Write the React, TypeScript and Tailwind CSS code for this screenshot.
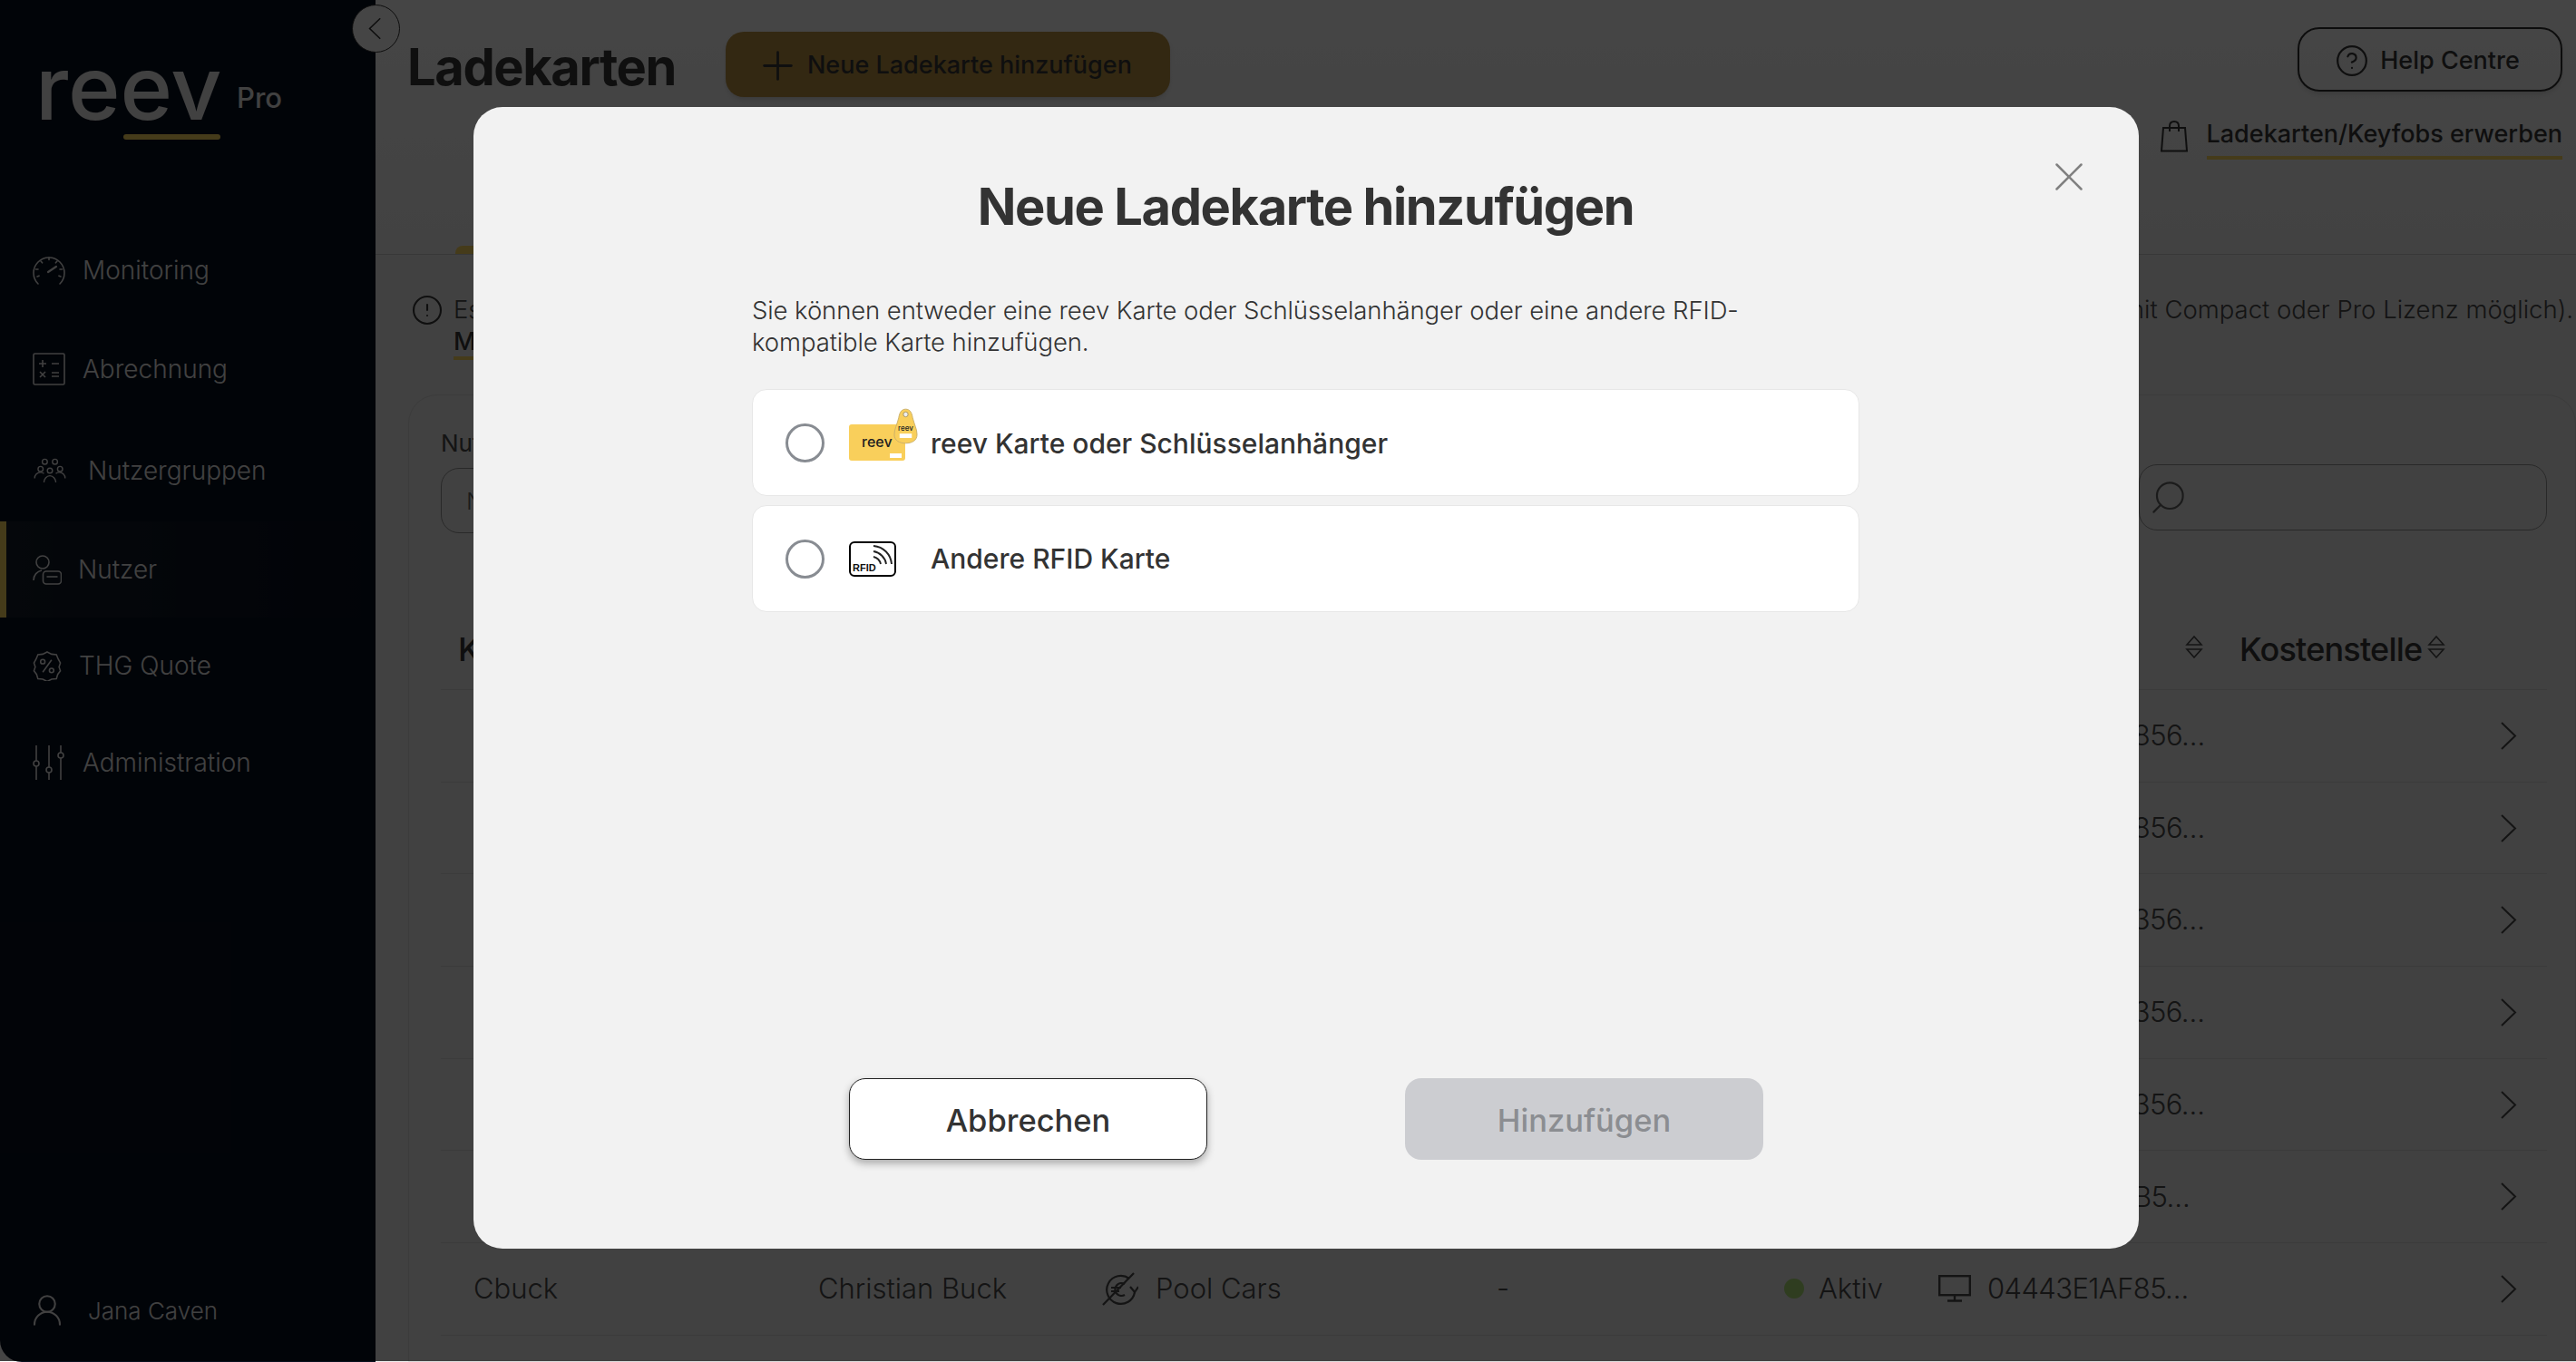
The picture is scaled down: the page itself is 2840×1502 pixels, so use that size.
import React from "react";
import { CircleAlert, CircleHelp, Plus, Search, UserRound, X } from "lucide-react";

const font = "font-['Inter','Liberation_Sans',sans-serif]";

const GaugeIcon = () => (
  <svg viewBox="0 0 36 36" className="w-9 h-9" fill="none" stroke="currentColor" strokeWidth="1.6" strokeLinecap="round">
    <path d="M6 33A17 17 0 1 1 30 33" />
    <path d="M18 4v2.500M9 8l1.600 1.800M27 8l-1.600 1.800M3.500 17H6M30 17h2.500M5 25l2-.8M31 25l-2-.8" />
    <path d="M17 20l9-6" strokeWidth="2.200" />
  </svg>
);

const CalcIcon = () => (
  <svg viewBox="0 0 36 36" className="w-9 h-9" fill="none" stroke="currentColor" strokeWidth="1.600">
    <rect x="1" y="1" width="34" height="34" rx="1.500" />
    <path d="M7 12h8M11 8v8M21 12h8M8 21l6 6M14 21l-6 6M21 22h8M21 26h8" />
  </svg>
);

const GroupIcon = () => (
  <svg viewBox="0 0 38 30" className="w-[38px] h-[28px]" fill="none" stroke="currentColor" strokeWidth="1.500">
    <circle cx="13" cy="4.500" r="3" />
    <circle cx="25" cy="4.500" r="3" />
    <circle cx="8" cy="13" r="3" />
    <circle cx="19" cy="15" r="3" />
    <circle cx="31" cy="13" r="3" />
    <path d="M1 24c0-4 3-7 7-7 2 0 3 .6 4 1.500M37 24c0-4-3-7-7-7-2 0-3 .6-4 1.500M12 29c0-4 3-8 7-8s7 4 7 8" />
  </svg>
);

const UserCardIcon = () => (
  <svg viewBox="0 0 32 33" className="w-8 h-[33px]" fill="none" stroke="currentColor" strokeWidth="1.600">
    <circle cx="11" cy="8" r="7" />
    <path d="M1 28c0-6 4-10 9-11" />
    <rect x="11.500" y="18" width="20" height="14" rx="3.500" />
    <path d="M15.500 24h12" />
  </svg>
);

const PercentIcon = () => (
  <svg viewBox="0 0 32 34" className="w-8 h-[33px]" fill="none" stroke="currentColor" strokeWidth="1.600">
    <path d="M16 1l5 2.500 5.500.5 2 5 2.500 4.500-1.500 4.500 1.500 4.500-3 4-1.500 5-5.500.5-5 2.500-5-2.500-5.500-.5-1.500-5-3-4 1.500-4.500L1 13.500 3.500 9l2-5L11 3.500z" />
    <path d="M11 24l10-14" />
    <circle cx="11" cy="12" r="2.500" />
    <circle cx="21" cy="22" r="2.500" />
  </svg>
);

const SliderIcon = () => (
  <svg viewBox="0 0 36 38" className="w-9 h-[38px]" fill="none" stroke="currentColor" strokeWidth="1.600">
    <path d="M4 0v17M4 23v15M18 0v24M18 30v8M31 0v8M31 14v24" />
    <circle cx="4" cy="20" r="3" />
    <circle cx="18" cy="27" r="3" />
    <circle cx="31" cy="11" r="3" />
  </svg>
);

const SortIcon = () => (
  <svg viewBox="0 0 20 25" className="w-5 h-[25px] -mt-[5px]" fill="none" stroke="currentColor" strokeWidth="1.600">
    <path d="M2 10L10 1l8 9zM2 15l8 9 8-9z" />
  </svg>
);

const PoolCarIcon = () => (
  <svg viewBox="0 0 40 37" className="w-10 h-[37px] shrink-0" fill="none" stroke="currentColor" strokeWidth="2.200">
    <path d="M30 7A15.500 15.500 0 1 0 36 22" />
    <path d="M1 36L35 1" />
    <path d="M31 16l5 6 4-6" />
    <path d="M25 13a7 7 0 1 0 0 12M10 17h11M10 21h9" />
  </svg>
);

const MonitorIcon = () => (
  <svg viewBox="0 0 36 30" className="w-9 h-[30px] shrink-0" fill="none" stroke="currentColor" strokeWidth="2.400">
    <rect x="1.200" y="1.200" width="33.600" height="21" />
    <path d="M18 23v5M10 28.500h16" />
  </svg>
);

const BagIcon = () => (
  <svg viewBox="0 0 30 35" className="w-[30px] h-[35px] mt-[3px] shrink-0" fill="none" stroke="currentColor" strokeWidth="2">
    <path d="M3 8h24l2 25.500H1z" />
    <path d="M10 12V6c0-3 2-5 5-5s5 2 5 5v6" />
  </svg>
);

const ChevronThin = ({ left = false }: { left?: boolean }) => (
  <svg viewBox="0 0 18 31" className={left ? "w-[14px] h-[25px]" : "w-[18px] h-[31px]"} fill="none" stroke="currentColor" strokeWidth="2">
    <path d={left ? "M17 1L2 15.500 17 30" : "M1 1l15 14.500L1 30"} />
  </svg>
);

const ReevCardIcon = () => (
  <div className="relative w-[76px] h-10">
    <div className="w-[62px] h-[40px] bg-[#f9cf5b] rounded-[3px] pl-[14px] pt-[9px]">
      <div className={`text-[16px] leading-[20px] font-medium text-[#222] ${font}`}>reev</div>
    </div>
    <div className="absolute left-[45px] bottom-[3px] w-[13px] h-[5px] bg-white" />
    <svg viewBox="0 0 28 41" className="absolute left-[49px] -top-[18px] w-[27px] h-[40px]">
      <path d="M14 1c5 0 7 4 8 10 2 8 5 13 5 19 0 7-6 10-13 10S1 37 1 30c0-6 3-11 5-19C7 5 9 1 14 1z" fill="#f9cf5b" stroke="#cbb06a" strokeWidth="1" />
      <circle cx="14" cy="7" r="2.800" fill="#eee" stroke="#a8965f" />
      <rect x="7" y="29" width="14" height="5" fill="#fff" />
    </svg>
    <div className={`absolute left-[54px] -top-[1px] text-[8px] leading-[10px] font-medium text-[#222] ${font}`}>reev</div>
  </div>
);

const RfidIcon = () => (
  <div className="relative w-[52px] h-[39px] border-[2.500px] border-black rounded-[6px] bg-white">
    <svg viewBox="0 0 24 24" className="absolute right-[1px] top-[1px] w-[24px] h-[24px]" fill="none" stroke="#222" strokeWidth="1.900">
      <path d="M2 2c11 1 19 9 20 20M2 8c7 1 13 7 14 14M2 14c4 1 7 4 8 8" />
    </svg>
    <div className="absolute left-[2px] bottom-[1px] text-[11px] leading-[13px] font-bold text-[#111] font-['Liberation_Sans',sans-serif]">RFID</div>
  </div>
);

const navItems = [
  { label: "Monitoring", icon: <GaugeIcon />, gap: "gap-[19px]", h: "h-[107px]" },
  { label: "Abrechnung", icon: <CalcIcon />, gap: "gap-[19px]", h: "h-[112px]" },
  { label: "Nutzergruppen", icon: <GroupIcon />, gap: "gap-[23px] pl-[3px]", h: "h-[112px]" },
  { label: "Nutzer", icon: <UserCardIcon />, gap: "gap-[18px]", h: "h-[106px]", active: true },
  { label: "THG Quote", icon: <PercentIcon />, gap: "gap-[19px]", h: "h-[106px]" },
  { label: "Administration", icon: <SliderIcon />, gap: "gap-[19px]", h: "h-[107px]" },
];

const hiddenCodes = ["04443E1AF856…", "04443E1AF856…", "04443E1AF356…", "04443E1AF356…", "04443E1AF356…", "04443E1AEB5…"];

const Sidebar = () => (
  <aside className="w-[414px] shrink-0 h-full bg-[#070f1e] rounded-bl-[24px] flex flex-col text-[#eee] pt-[80px]">
    <div className="pl-[43px] flex items-start h-[80px]">
      <div className="flex flex-col items-end w-[200px] -mt-[9px]">
        <div className={`self-start whitespace-nowrap text-[98px] leading-[52px] h-[77px] font-medium -ml-[4px] ${font}`}>reev</div>
        <div className="w-[107px] h-[6px] rounded-full bg-[#ffda60]" />
      </div>
      <div className={`ml-[18px] mt-[10px] text-[31px] leading-9 font-medium ${font}`}>Pro</div>
    </div>
    <nav className="mt-[84px] flex flex-col">
      {navItems.map((item) => (
        <div
          key={item.label}
          className={`${item.h} flex items-center ${item.gap} ${item.active ? "bg-gradient-to-r from-white/5 to-transparent border-l-[7px] border-[#ffda60] pl-[29px]" : "pl-[36px]"}`}
        >
          {item.icon}
          <span className={`text-[28px] font-light ${font}`}>{item.label}</span>
        </div>
      ))}
    </nav>
    <div className="mt-auto mb-[36px] pl-[31px] flex items-center gap-[24px]">
      <UserRound className="w-[42px] h-[42px]" strokeWidth={1.200} />
      <span className={`text-[26px] font-light ${font}`}>Jana Caven</span>
    </div>
  </aside>
);

const Header = () => (
  <header className="h-[281px] shrink-0 border-b border-[#ccc] pl-[35px] pr-[15px] flex flex-col relative bg-gradient-to-b from-white to-[#f4f4f4]">
    <div className="flex items-start justify-between pt-[30px]">
      <div className="flex items-center pt-[5px]">
        <h1 className={`text-[56px] leading-[66px] pt-[6px] font-bold text-[#3a3a3a] tracking-[-1.400px] ${font}`}>Ladekarten</h1>
        <button className={`ml-[55px] w-[490px] h-[72px] pt-[2px] rounded-[20px] bg-[#bd9443] flex items-center pl-[32px] gap-[7px] text-[27px] font-medium text-[#3a3a3a] shadow-md ${font}`}>
          <Plus className="w-[51px] h-[51px]" strokeWidth={1.300} />
          Neue Ladekarte hinzufügen
        </button>
      </div>
      <button className={`w-[292px] h-[71px] pt-[3px] pr-[6px] rounded-[24px] border-2 border-[#333] flex items-center justify-center gap-[12px] text-[27px] font-medium text-[#3a3a3a] shadow-md ${font}`}>
        <CircleHelp className="w-[38px] h-[38px]" strokeWidth={1.400} />
        Help Centre
      </button>
    </div>
    <div className="flex justify-end items-start mt-[23px] gap-[21px] text-[#3a3a3a]">
      <BagIcon />
      <span className={`text-[27px] leading-[36px] pb-[6px] font-medium border-b-4 border-[#ffda60] ${font}`}>Ladekarten/Keyfobs erwerben</span>
    </div>
    <div className="absolute left-[88px] bottom-0 w-[200px] h-[9px] rounded-t-[8px] bg-[#ffda60]" />
  </header>
);

const Row = ({ code, full = false }: { code: string; full?: boolean }) => (
  <div className={`h-[101.700px] pl-[36px] flex items-center border-b border-[#d8d8d8] text-[31px] font-light text-[#4a4a4a] ${font}`}>
    <span className="w-[380px] shrink-0">{full && "Cbuck"}</span>
    <span className="w-[313px] shrink-0">{full && "Christian Buck"}</span>
    <span className="w-[435px] shrink-0 flex items-center gap-[19px]">
      {full && <PoolCarIcon />}
      {full && "Pool Cars"}
    </span>
    <span className="w-[317px] shrink-0">{full && "-"}</span>
    <span className="w-[170px] shrink-0 flex items-center gap-[16px]">
      {full && <span className="w-[22px] h-[22px] rounded-full bg-[#aee276]" />}
      {full && "Aktiv"}
    </span>
    <span className="shrink-0 flex items-center gap-[18px] whitespace-nowrap tracking-[-.6px] text-[#4a4a4a]">
      <MonitorIcon />
      {code}
    </span>
    <span className="ml-auto mr-[33px]"><ChevronThin /></span>
  </div>
);

const Table = () => (
  <section className="mt-[41px] ml-[36px] flex-1 rounded-t-[32px] border border-[#dcdcdc] bg-[#eee] pl-[35px] pr-[31px]">
    <div className="flex items-end justify-between h-[152px]">
      <div className="w-[600px]">
        <div className={`text-[26px] leading-8 text-[#4a4a4a] ${font}`}>Nutzer</div>
        <div className={`mt-[11px] h-[72px] rounded-[20px] border border-[#999] flex items-center pl-[27px] text-[26px] font-light text-[#666] ${font}`}>Nutzer suchen</div>
      </div>
      <div className="w-[450px] h-[73px] mb-[3px] rounded-[20px] border border-[#999] flex items-center pl-[10px] text-[#666]">
        <Search className="w-[43px] h-[43px] -scale-x-100" strokeWidth={1.200} />
      </div>
    </div>
    <div className="h-[173px] pt-[84px] flex items-center border-b border-[#d8d8d8]">
      <span className={`w-[1923px] pl-[19px] text-[36px] leading-[44px] font-medium text-[#3a3a3a] ${font}`}>Karte</span>
      <span className="text-[#4a4a4a]"><SortIcon /></span>
      <span className={`ml-[40px] text-[36px] leading-[44px] font-medium tracking-[-.8px] text-[#3a3a3a] ${font}`}>Kostenstelle</span>
      <span className="ml-[6px] text-[#4a4a4a]"><SortIcon /></span>
    </div>
    {hiddenCodes.map((code, i) => (
      <Row key={i} code={code} />
    ))}
    <Row code="04443E1AF85…" full />
  </section>
);

const Dialog = () => (
  <div className="absolute left-0 right-0 top-0 bottom-[1px] bg-black/[0.73] flex items-start justify-center pt-[118px] pl-[40px]">
    <div className="relative w-[1836px] h-[1259px] rounded-[32px] bg-[#f2f2f2] pl-[307px] pr-[308px] flex flex-col">
      <button className="absolute right-[50px] top-[50px] text-[#808080]"><X className="w-[54px] h-[54px]" strokeWidth={1.100} /></button>
      <h2 className={`mt-[77px] text-center text-[56px] leading-[66px] font-bold text-[#333] tracking-[-1.400px] ${font}`}>Neue Ladekarte hinzufügen</h2>
      <p className={`mt-[64px] text-[27.500px] leading-[35px] font-light tracking-[-.1px] text-[#333] ${font}`}>
        Sie können entweder eine reev Karte oder Schlüsselanhänger oder eine andere RFID-
        <br />
        kompatible Karte hinzufügen.
      </p>
      <div className="mt-[34px] flex flex-col gap-[10px]">
        <label className="h-[118px] rounded-[16px] bg-white border border-[#e7e7e7] flex items-center pl-[36px]">
          <span className="w-[43px] h-[43px] rounded-full border-[3px] border-[#888c92]" />
          <span className="ml-[27px]"><ReevCardIcon /></span>
          <span className={`ml-[14px] pt-[2px] text-[30px] font-medium text-[#333] ${font}`}>reev Karte oder Schlüsselanhänger</span>
        </label>
        <label className="h-[118px] rounded-[16px] bg-white border border-[#e7e7e7] flex items-center pl-[36px]">
          <span className="w-[43px] h-[43px] rounded-full border-[3px] border-[#888c92]" />
          <span className="ml-[27px]"><RfidIcon /></span>
          <span className={`ml-[38px] text-[30px] font-medium text-[#333] ${font}`}>Andere RFID Karte</span>
        </label>
      </div>
      <div className="mt-auto mb-[98px] flex justify-between pl-[107px] pr-[106px]">
        <button className={`w-[395px] h-[90px] pt-[3px] rounded-[18px] bg-white border border-[#222] shadow-[0_4px_8px_rgba(0,0,0,0.3)] text-[34.500px] font-medium text-[#333] ${font}`}>Abbrechen</button>
        <button className={`w-[395px] h-[90px] pt-[3px] rounded-[18px] bg-[#cccdd1] text-[34.500px] font-medium text-[#8b8d91] ${font}`}>Hinzufügen</button>
      </div>
    </div>
  </div>
);

export default function App() {
  return (
    <div className="relative w-[2840px] h-[1502px] overflow-hidden flex bg-white">
      <Sidebar />
      <main className="relative flex-1 flex flex-col min-w-0 bg-[#eee] overflow-hidden">
        <Header />
        <div className={`mt-[43px] pl-[39px] pr-[3px] flex items-start text-[27.500px] leading-[35px] text-[#4a4a4a] ${font}`}>
          <CircleAlert className="w-9 h-9 shrink-0 mr-[11px] text-[#3a3a3a]" strokeWidth={1.400} />
          <div className="flex-1 whitespace-nowrap">
            <div className="flex justify-between font-light">
              <span>Es gibt</span>
              <span>(nur mit Compact oder Pro Lizenz möglich).</span>
            </div>
            <span className="font-medium text-[#3a3a3a] border-b-4 border-[#ffda60]">Mehr</span>
          </div>
        </div>
        <Table />
      </main>
      <button className="absolute left-[388px] top-[5px] w-[53px] h-[53px] rounded-full bg-white border border-[#333] flex items-center justify-center text-[#333] pr-[4px]">
        <ChevronThin left />
      </button>
      <Dialog />
    </div>
  );
}
